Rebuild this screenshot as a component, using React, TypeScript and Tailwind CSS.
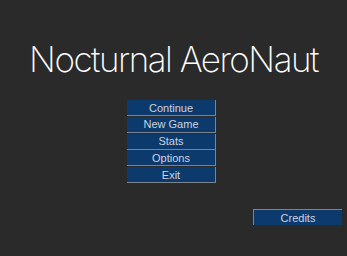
const MENU = ['Continue', 'New Game', 'Stats', 'Options', 'Exit'];

function MenuButton({ label, pressed }: { label: string; pressed?: boolean }) {
  return (
    <button
      className={
        'flex h-[16px] w-[89px] items-center justify-center bg-[#0c3a6c] pt-[1px] text-[11px] leading-none text-[#cdd4e2] ' +
        (pressed
          ? 'border-t border-l border-[#7d838b]'
          : 'border-r border-b border-[#7d838b]')
      }
    >
      {label}
    </button>
  );
}

export default function App() {
  return (
    <div
      className="flex h-[256px] w-[347px] flex-col bg-[#2a2a2a]"
      style={{ fontFamily: '"Liberation Sans", Arial, sans-serif' }}
    >
      <h1
        className="mt-[37px] text-center text-[35px] leading-[44px] font-[250] tracking-[-1.5px] text-white"
        style={{ fontFamily: 'Inter, "Liberation Sans", sans-serif' }}
      >
        Nocturnal AeroNaut
      </h1>
      <div className="mt-[19px] flex flex-col items-center gap-[0.75px] pr-[4px]">
        {MENU.map((m) => (
          <MenuButton key={m} label={m} />
        ))}
      </div>
      <div className="mt-[26px] flex justify-end pr-[5px]">
        <MenuButton label="Credits" pressed />
      </div>
    </div>
  );
}
